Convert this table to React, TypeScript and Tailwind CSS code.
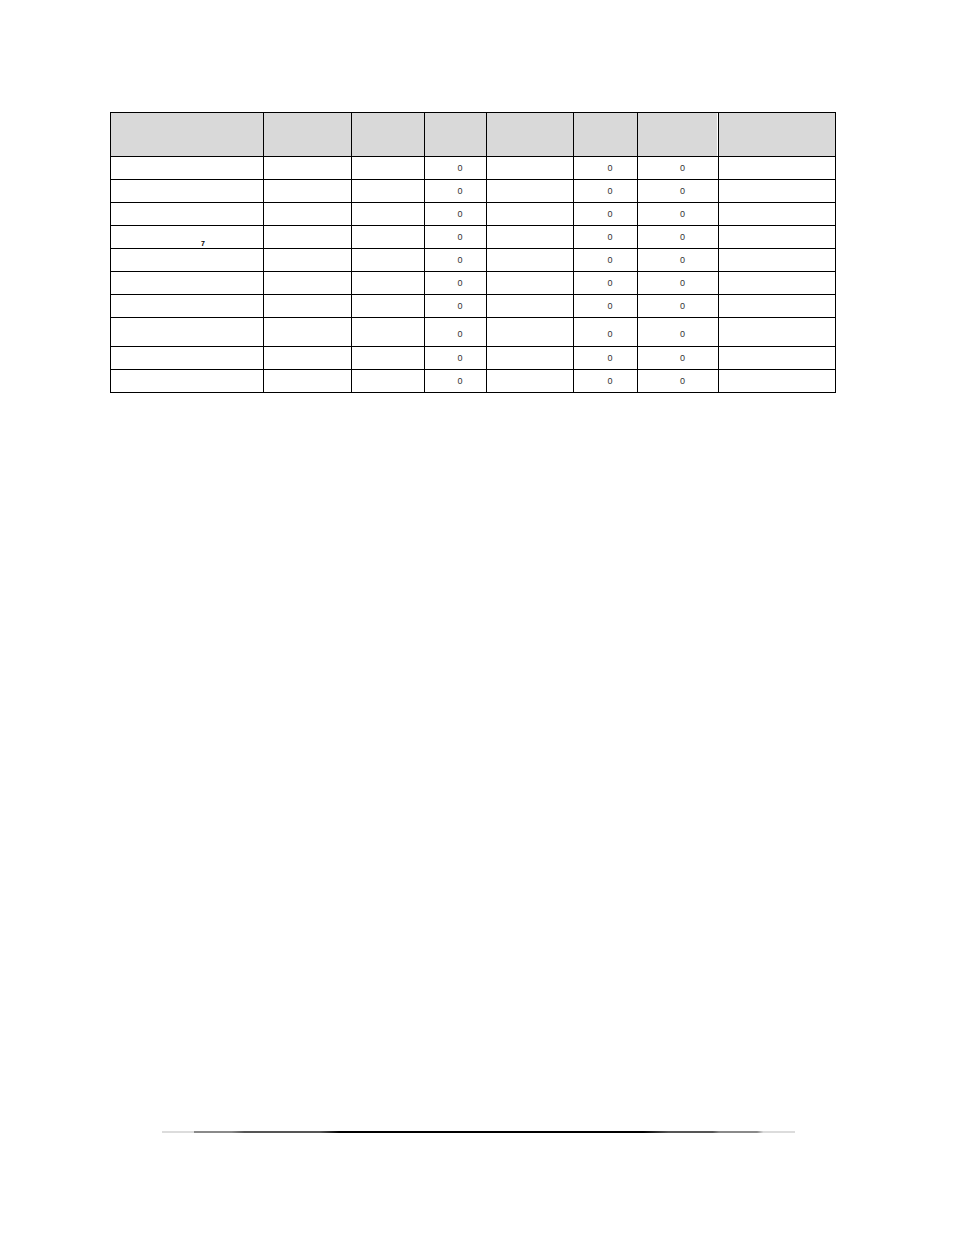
const colWidths = [153, 88, 73, 62, 87, 64, 81, 117];

// which columns show a zero, per row (col 3, 5, 6)
const zeroCols = [3, 5, 6];

const rows = [
  { tall: false, mark: "" },
  { tall: false, mark: "" },
  { tall: false, mark: "" },
  { tall: false, mark: "7" },
  { tall: false, mark: "" },
  { tall: false, mark: "" },
  { tall: false, mark: "" },
  { tall: true, mark: "" },
  { tall: false, mark: "" },
  { tall: false, mark: "" },
];

export default function App() {
  return (
    <div className="min-h-[1235px] w-[954px] bg-white font-['Liberation_Sans',Arial,sans-serif]">
      <div className="pt-[112px] pl-[110px]">
        <table className="table-fixed border-collapse w-[726px]">
          <colgroup>
            {colWidths.map((w, i) => (
              <col key={i} style={{ width: w }} />
            ))}
          </colgroup>
          <thead>
            <tr className="h-[44px]">
              {colWidths.map((_, i) => (
                <th
                  key={i}
                  className={`border border-black bg-[#d9d9d9] p-0 ${
                    i === 6 ? "shadow-[inset_-1px_0_0_#fff]" : ""
                  }`}
                />
              ))}
            </tr>
          </thead>
          <tbody>
            {rows.map((row, r) => (
              <tr key={r} className={row.tall ? "h-[29px]" : "h-[23px]"}>
                {colWidths.map((_, c) => (
                  <td
                    key={c}
                    className={`border border-black p-0 text-center text-[9px] leading-none text-[#333] ${
                      zeroCols.includes(c) ? "pl-[9px]" : ""
                    } ${row.tall ? "align-bottom pb-[7px]" : "align-middle pt-[1px]"}`}
                  >
                    {zeroCols.includes(c) ? "0" : ""}
                    {c === 0 && row.mark ? (
                      <div className="flex h-[21px] items-end pb-[1px] pl-[90px]">
                        <span className="text-[7px] font-bold text-black">{row.mark}</span>
                      </div>
                    ) : null}
                  </td>
                ))}
              </tr>
            ))}
          </tbody>
        </table>
      </div>

      {/* footer rule */}
      <div className="ml-[162px] mt-[738px] h-[2px] w-[633px] bg-[linear-gradient(to_right,#dcdcdc_0%,#dcdcdc_5%,#8a8a8a_5%,#8a8a8a_11%,#555_13%,#555_25%,#000_28%,#000_76%,#555_80%,#555_87%,#8a8a8a_88%,#8a8a8a_94%,#dcdcdc_95%,#dcdcdc_100%)]" />
    </div>
  );
}
